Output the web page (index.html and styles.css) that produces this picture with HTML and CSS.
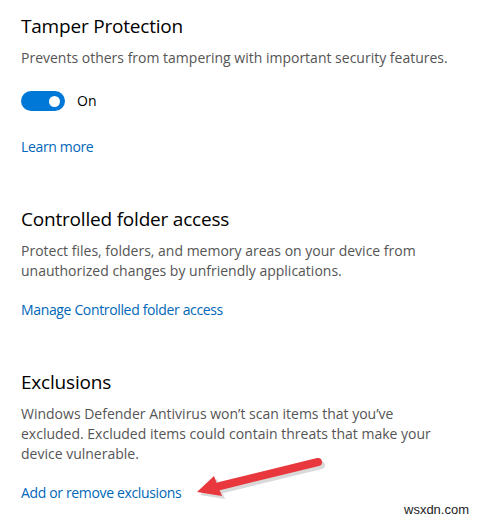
FILE: index.html
```html
<!DOCTYPE html>
<html lang="en">
<head>
<meta charset="utf-8">
<title>Virus &amp; threat protection settings</title>
<link rel="stylesheet" href="styles.css">
</head>
<body>
<main class="page">
  <section class="group">
    <h2 class="title">Tamper Protection</h2>
    <p class="desc">Prevents others from tampering with important security features.</p>
    <div class="toggle-row">
      <span class="toggle" role="switch" aria-checked="true"><span class="knob"></span></span>
      <span class="toggle-label">On</span>
    </div>
    <a class="link" href="#">Learn more</a>
  </section>
  <section class="group">
    <h2 class="title">Controlled folder access</h2>
    <p class="desc">Protect files, folders, and memory areas on your device from<br>unauthorized changes by unfriendly applications.</p>
    <a class="link link-tight" href="#">Manage Controlled folder access</a>
  </section>
  <section class="group">
    <h2 class="title">Exclusions</h2>
    <p class="desc">Windows Defender Antivirus won’t scan items that you’ve<br>excluded. Excluded items could contain threats that make your<br>device vulnerable.</p>
    <a class="link link-tight" href="#">Add or remove exclusions</a>
  </section>
</main>
<svg class="arrow" width="140" height="52" viewBox="0 0 140 52" aria-hidden="true">
  <g transform="translate(3,3)" opacity="0.22" fill="#555" stroke="#555">
    <line x1="128" y1="13" x2="30" y2="37" stroke-width="8" stroke-linecap="round"/>
    <polygon points="7,43 24,27 32,47" stroke="none"/>
  </g>
  <line x1="128" y1="13" x2="30" y2="37" stroke="#e8383d" stroke-width="8" stroke-linecap="round"/>
  <polygon points="7,43 24,27 32,47" fill="#e8383d"/>
</svg>
<div class="watermark">wsxdn.com</div>
</body>
</html>
```
FILE: styles.css
```css
html, body {
  margin: 0;
  padding: 0;
  background: #ffffff;
}
body {
  width: 478px;
  height: 521px;
  position: relative;
  overflow: hidden;
  font-family: "Open Sans", "Noto Sans", "Liberation Sans", sans-serif;
}
.page {
  padding: 12px 0 0 21px;
  display: flex;
  flex-direction: column;
  gap: 48px;
}
.group {
  display: flex;
  flex-direction: column;
  align-items: flex-start;
}
.title {
  margin: 0;
  font-size: 19px;
  line-height: 28px;
  font-weight: 400;
  letter-spacing: -0.2px;
  color: #000000;
}
.desc {
  margin: 8px 0 0;
  font-size: 14px;
  line-height: 20px;
  color: #555555;
  white-space: nowrap;
}
.toggle-row {
  margin-top: 23px;
  display: flex;
  align-items: center;
  gap: 12px;
  height: 20px;
}
.toggle {
  width: 44px;
  height: 20px;
  border-radius: 10px;
  background: #0078d7;
  display: flex;
  align-items: center;
  justify-content: flex-end;
  padding-right: 5px;
  box-sizing: border-box;
}
.knob {
  width: 11px;
  height: 11px;
  border-radius: 50%;
  background: #ffffff;
}
.toggle-label {
  font-size: 14px;
  line-height: 20px;
  color: #000000;
}
.link {
  margin-top: 26px;
  font-size: 14px;
  line-height: 20px;
  letter-spacing: -0.35px;
  color: #0067b8;
  text-decoration: none;
}
.link-tight {
  margin-top: 19px;
}
.arrow {
  position: absolute;
  left: 190px;
  top: 449px;
}
.watermark {
  position: absolute;
  left: 404px;
  top: 502px;
  font-family: "Liberation Sans", Arial, sans-serif;
  font-size: 13px;
  line-height: 16px;
  color: #222222;
}
```
